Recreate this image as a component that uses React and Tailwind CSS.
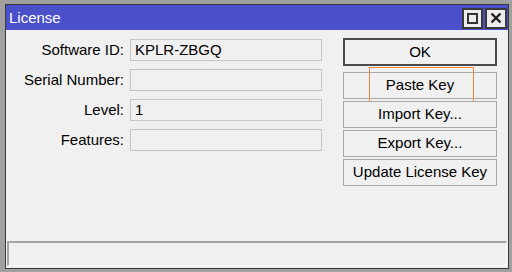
import React from 'react';

const font = { fontFamily: '"Liberation Sans", Arial, sans-serif' };

const fields = [
  { label: 'Software ID:', value: 'KPLR-ZBGQ' },
  { label: 'Serial Number:', value: '' },
  { label: 'Level:', value: '1' },
  { label: 'Features:', value: '' },
];

const Field = ({ label, value }) => (
  <div className="flex items-center h-[22px]">
    <span className="w-[124px] text-right pr-[6px] text-[15px] text-black">{label}</span>
    <div className="w-[192px] h-[22px] border border-[#c4c4c4] bg-[#f0f0f0] px-[4px] flex items-center text-[15px] text-black">
      {value}
    </div>
  </div>
);

const Button = ({ children, primary, focused }) => (
  <div className="relative">
    <div
      className={
        primary
          ? 'h-[28px] border-2 border-[#4a4a4a] bg-[#f0f0f0] flex items-center justify-center text-[15px] text-black'
          : 'h-[27px] border border-[#a8a8a8] bg-[#f0f0f0] flex items-center justify-center text-[15px] text-black'
      }
    >
      {children}
    </div>
    {/* focus rectangle */}
    {focused && (
      <div className="absolute left-[26px] right-[23px] top-[-5px] bottom-[-4px] border border-[#f4883e] pointer-events-none" />
    )}
  </div>
);

export default function App() {
  return (
    <div className="w-[512px] h-[272px] bg-[#a0a0a0] pl-[5px] pt-[4px]" style={font}>
      <div className="w-[504px] h-[265px] border border-[#3a3a3a] bg-[#f0f0f0] flex flex-col">
        <div className="h-[25px] bg-[#4b4fc9] flex items-center pl-[3px] pr-[1px] pt-[1px]">
          <span className="flex-1 text-white text-[15px]">License</span>
          <div className="flex gap-[2px]">
            <div className="w-[21px] h-[21px] border-2 border-[#3a3a3a] bg-[#ececec] flex items-center justify-center">
              <div className="w-[11px] h-[11px] border-2 border-[#333]" />
            </div>
            <div className="w-[22px] h-[21px] border-2 border-[#3a3a3a] bg-[#ececec] flex items-center justify-center">
              <svg width="12" height="12" viewBox="0 0 12 12">
                <path d="M1.5 1.5 L10.5 10.5 M10.5 1.5 L1.5 10.5" stroke="#222" strokeWidth="2.4" />
              </svg>
            </div>
          </div>
        </div>
        <div className="flex-1 flex pt-[8px]">
          <div className="flex flex-col gap-[8px] pt-[1px]">
            {fields.map((f) => (
              <Field key={f.label} {...f} />
            ))}
          </div>
          <div className="ml-[21px] w-[154px] flex flex-col">
            <Button primary>OK</Button>
            <div className="h-[6px]" />
            <div className="flex flex-col gap-[2px]">
              <Button focused>Paste Key</Button>
              <Button>Import Key...</Button>
              <Button>Export Key...</Button>
              <Button>Update License Key</Button>
            </div>
          </div>
        </div>
        <div className="mx-[1px] mb-[2px] h-[25px] border-t-2 border-l-2 border-[#a4a4a4] border-r border-b border-r-[#fafafa] border-b-[#fafafa] bg-[#f0f0f0]" />
      </div>
    </div>
  );
}
